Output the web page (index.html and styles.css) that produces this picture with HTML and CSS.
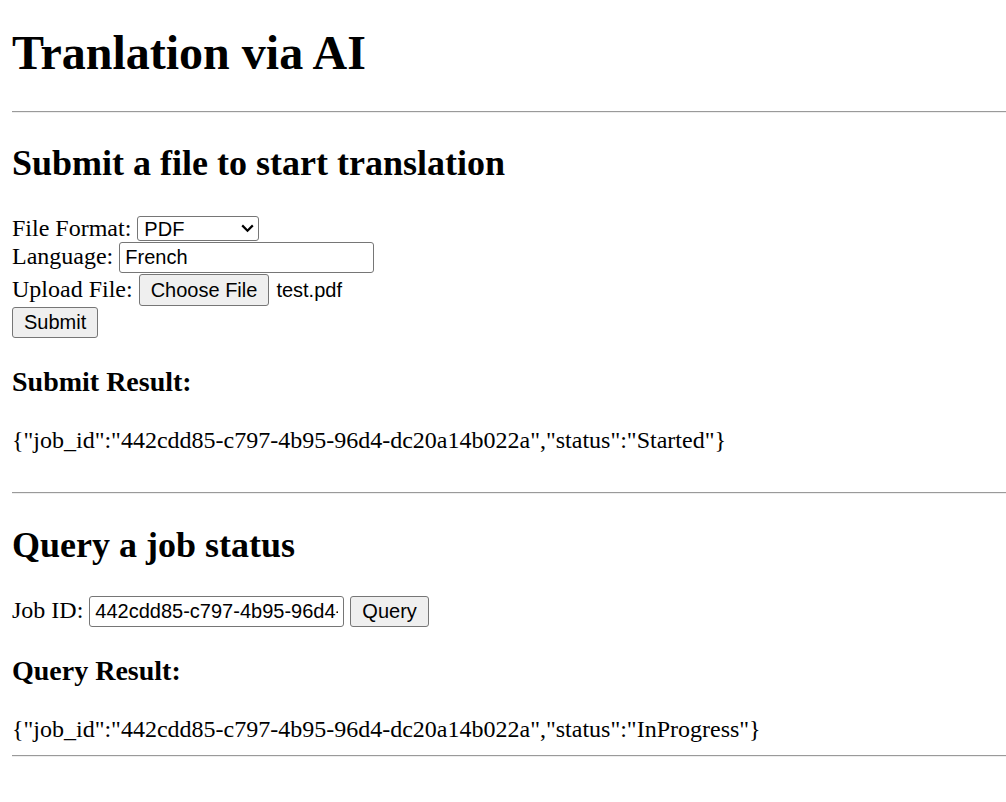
FILE: index.html
```html
<!DOCTYPE html>
<html lang="en">
<head>
<meta charset="utf-8">
<title>Tranlation via AI</title>
<link rel="stylesheet" href="styles.css">
</head>
<body>
<main class="page">
  <h1 class="title">Tranlation via AI</h1>
  <hr class="rule">

  <section class="panel">
    <h2 class="section-title">Submit a file to start translation</h2>
    <form class="form">
      <div class="row">
        <label class="label" for="fmt">File Format:</label>
        <span class="select-wrap">
          <select id="fmt" class="select"><option>PDF</option><option>DOCX</option><option>TXT</option></select>
          <svg class="chevron" width="13" height="9" viewBox="0 0 13 9" aria-hidden="true"><path d="M1.2 1.4 L6.5 6.7 L11.8 1.4" fill="none" stroke="#000" stroke-width="2.2"/></svg>
        </span>
      </div>
      <div class="row">
        <label class="label" for="lang">Language:</label>
        <input id="lang" class="text-input" type="text" value="French">
      </div>
      <div class="row">
        <span class="label">Upload File:</span>
        <span class="file">
          <button type="button" class="btn">Choose File</button>
          <span class="file-name">test.pdf</span>
        </span>
      </div>
      <div class="row">
        <button type="button" class="btn">Submit</button>
      </div>
    </form>
    <h3 class="result-title">Submit Result:</h3>
    <p class="result result-first">{"job_id":"442cdd85-c797-4b95-96d4-dc20a14b022a","status":"Started"}</p>
  </section>

  <hr class="rule">

  <section class="panel">
    <h2 class="section-title section-title-query">Query a job status</h2>
    <div class="row query-row">
      <label class="label" for="job">Job ID:</label>
      <input id="job" class="text-input" type="text" value="442cdd85-c797-4b95-96d4-dc20a14b022a">
      <button type="button" class="btn">Query</button>
    </div>
    <h3 class="result-title">Query Result:</h3>
    <div class="result result-last">{"job_id":"442cdd85-c797-4b95-96d4-dc20a14b022a","status":"InProgress"}</div>
  </section>

  <hr class="rule">
</main>
</body>
</html>
```

FILE: styles.css
```css
html, body {
  margin: 0;
  background: #fff;
}

body {
  font-family: "Liberation Serif", "Times New Roman", serif;
  font-size: 24px;
  line-height: 28px;
  color: #000;
}

.page {
  padding: 0 12px;
}

.title {
  font-size: 48px;
  line-height: 55px;
  font-weight: 700;
  margin: 25px 0 31px;
}

.rule {
  height: 0;
  border: 0;
  border-top: 1px solid #9a9a9a;
  border-bottom: 1px solid #eeeeee;
  margin: 0 -12px 0 0;
}

.section-title {
  font-size: 36px;
  line-height: 41px;
  font-weight: 700;
  margin: 30px 0 32px;
}

.section-title-query {
  margin: 31px 0 30px;
}

.form {
  display: flex;
  flex-direction: column;
  gap: 1px;
  margin: 0;
}

.row {
  display: flex;
  align-items: baseline;
  gap: 6px;
}

.label {
  line-height: 20px;
}

.select-wrap {
  position: relative;
  display: inline-flex;
}

.select {
  appearance: none;
  -webkit-appearance: none;
  box-sizing: border-box;
  width: 122px;
  height: 25px;
  margin: 0;
  padding: 0 0 0 6px;
  border: 1px solid #767676;
  border-radius: 3px;
  background: #fff;
  color: #000;
  font-family: "Liberation Sans", Arial, sans-serif;
  font-size: 20px;
}

.chevron {
  position: absolute;
  right: 5px;
  top: 8px;
  pointer-events: none;
}

.text-input {
  box-sizing: border-box;
  width: 255px;
  height: 31px;
  margin: 0;
  padding: 0 5px;
  border: 1px solid #767676;
  border-radius: 3px;
  background: #fff;
  color: #000;
  font-family: "Liberation Sans", Arial, sans-serif;
  font-size: 20px;
}

.btn {
  box-sizing: border-box;
  height: 31px;
  margin: 0;
  padding: 0 11px;
  border: 1px solid #767676;
  border-radius: 3px;
  background: #efefef;
  color: #000;
  font-family: "Liberation Sans", Arial, sans-serif;
  font-size: 20px;
}

.file {
  display: inline-flex;
  align-items: baseline;
  gap: 7px;
  font-family: "Liberation Sans", Arial, sans-serif;
  font-size: 20px;
}

.file .btn {
  height: 32px;
}

.file-name {
  line-height: 20px;
}

.result-title {
  font-size: 28px;
  line-height: 32px;
  font-weight: 700;
  margin: 28px 0 0;
}

.result {
  margin: 28px 0 0;
}

.result-first {
  margin-bottom: 38px;
}

.result-last {
  margin-bottom: 12px;
}
```
